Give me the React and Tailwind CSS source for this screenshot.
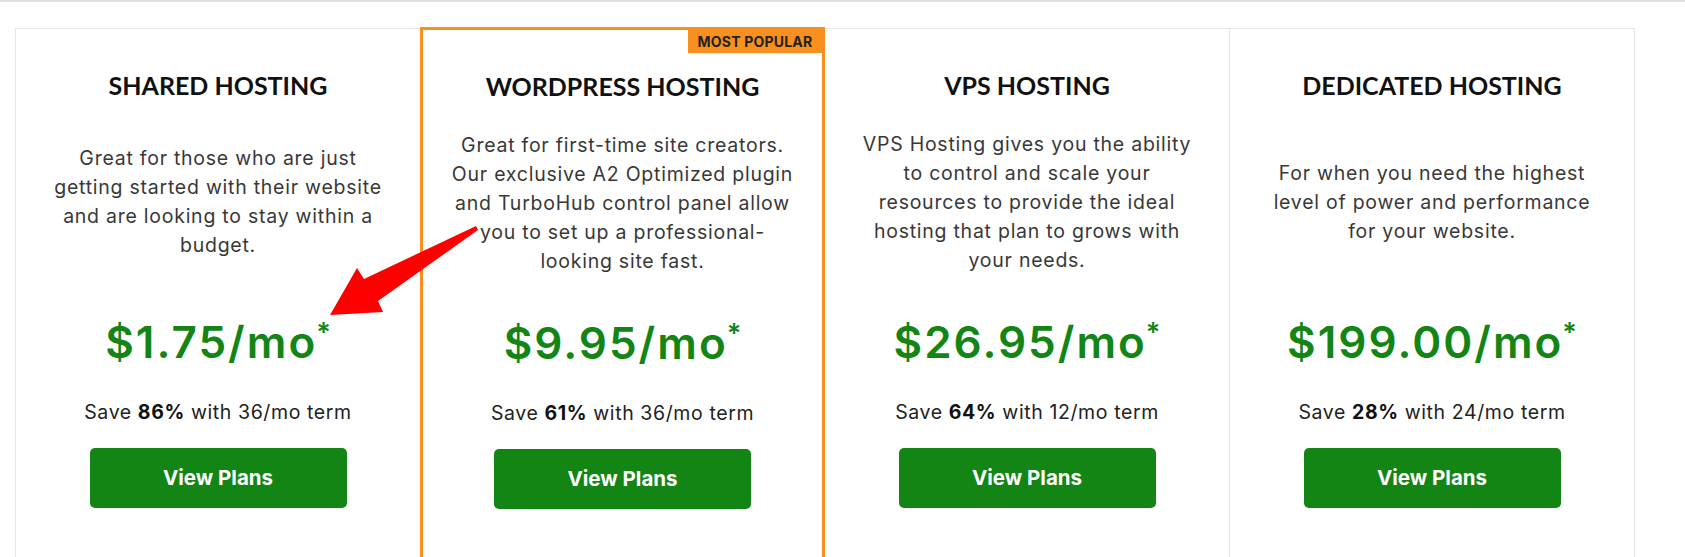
import React from 'react';

const PLANS = [
  {
    title: 'SHARED HOSTING',
    lines: ['Great for those who are just', 'getting started with their website', 'and are looking to stay within a', 'budget.'],
    price: '$1.75/mo',
    save: '86%',
    term: '36/mo',
  },
  {
    title: 'WORDPRESS HOSTING',
    lines: [
      'Great for first-time site creators.',
      'Our exclusive A2 Optimized plugin',
      'and TurboHub control panel allow',
      'you to set up a professional-',
      'looking site fast.',
    ],
    price: '$9.95/mo',
    save: '61%',
    term: '36/mo',
    popular: true,
  },
  {
    title: 'VPS HOSTING',
    lines: [
      'VPS Hosting gives you the ability',
      'to control and scale your',
      'resources to provide the ideal',
      'hosting that plan to grows with',
      'your needs.',
    ],
    price: '$26.95/mo',
    save: '64%',
    term: '12/mo',
  },
  {
    title: 'DEDICATED HOSTING',
    lines: ['For when you need the highest', 'level of power and performance', 'for your website.'],
    price: '$199.00/mo',
    save: '28%',
    term: '24/mo',
  },
];

const CARD_BORDERS = [
  'border-l border-t border-[#e6e6e6]',
  'border-[3px] border-[#f7901e] -mt-px',
  'border-t border-r border-[#e6e6e6]',
  'border-t border-r border-[#e6e6e6]',
];

function PlanCard({ plan, index }) {
  return (
    <div className={`relative h-[560px] flex flex-col items-center ${CARD_BORDERS[index]}`}>
      {plan.popular && (
        <div className="absolute top-0 right-0 h-[23px] w-[134px] bg-[#f7901e] flex items-center justify-center text-[14px] font-bold text-[#222] tracking-[0.2px]">
          MOST POPULAR
        </div>
      )}

      <h2 className="mt-[36px] h-[40px] text-[25px] leading-[40px] font-bold text-[#111] font-['Lato',sans-serif]">
        {plan.title}
      </h2>

      {/* description, vertically centred in a fixed box */}
      <div className="h-[162px] mt-[16px] flex flex-col justify-center text-center text-[19.5px] leading-[29px] tracking-[0.75px] text-[#383838]">
        {plan.lines.map((l) => (
          <span key={l} className="whitespace-nowrap">{l}</span>
        ))}
      </div>

      <div className="mt-[31px] h-[56px] flex items-center text-[#138515] font-semibold text-[44px] leading-none tracking-[2px]">
        <span>{plan.price}</span>
        <span className="self-start mt-[5px] -ml-[1px] text-[27px] leading-none tracking-normal">*</span>
      </div>

      <p className="mt-[30px] text-[19.5px] leading-[24px] tracking-[0.6px] text-[#222]">
        Save <b className="font-bold text-[#111]">{plan.save}</b> with {plan.term} term
      </p>

      <button className="mt-[24px] w-[257px] h-[60px] rounded-[5px] bg-[#138515] text-white text-[20.5px] font-bold">
        View Plans
      </button>
    </div>
  );
}

export default function App() {
  return (
    <div className="relative h-screen overflow-hidden bg-white border-t-2 border-[#e0e0e0] font-['Inter',sans-serif]">
      <div className="pt-[26px] pl-[15px]">
        <div className="grid grid-cols-4 w-[1620px]">
          {PLANS.map((p, i) => (
            <PlanCard key={p.title} plan={p} index={i} />
          ))}
        </div>
      </div>

      {/* red annotation arrow */}
      <svg className="absolute left-0 top-0 pointer-events-none" width="1685" height="557" viewBox="0 -2 1685 557">
        <polygon
          points="330,311 357,264 364,275 476,222 478,226 378,297 383,308"
          fill="#ff0000"
        />
      </svg>
    </div>
  );
}
